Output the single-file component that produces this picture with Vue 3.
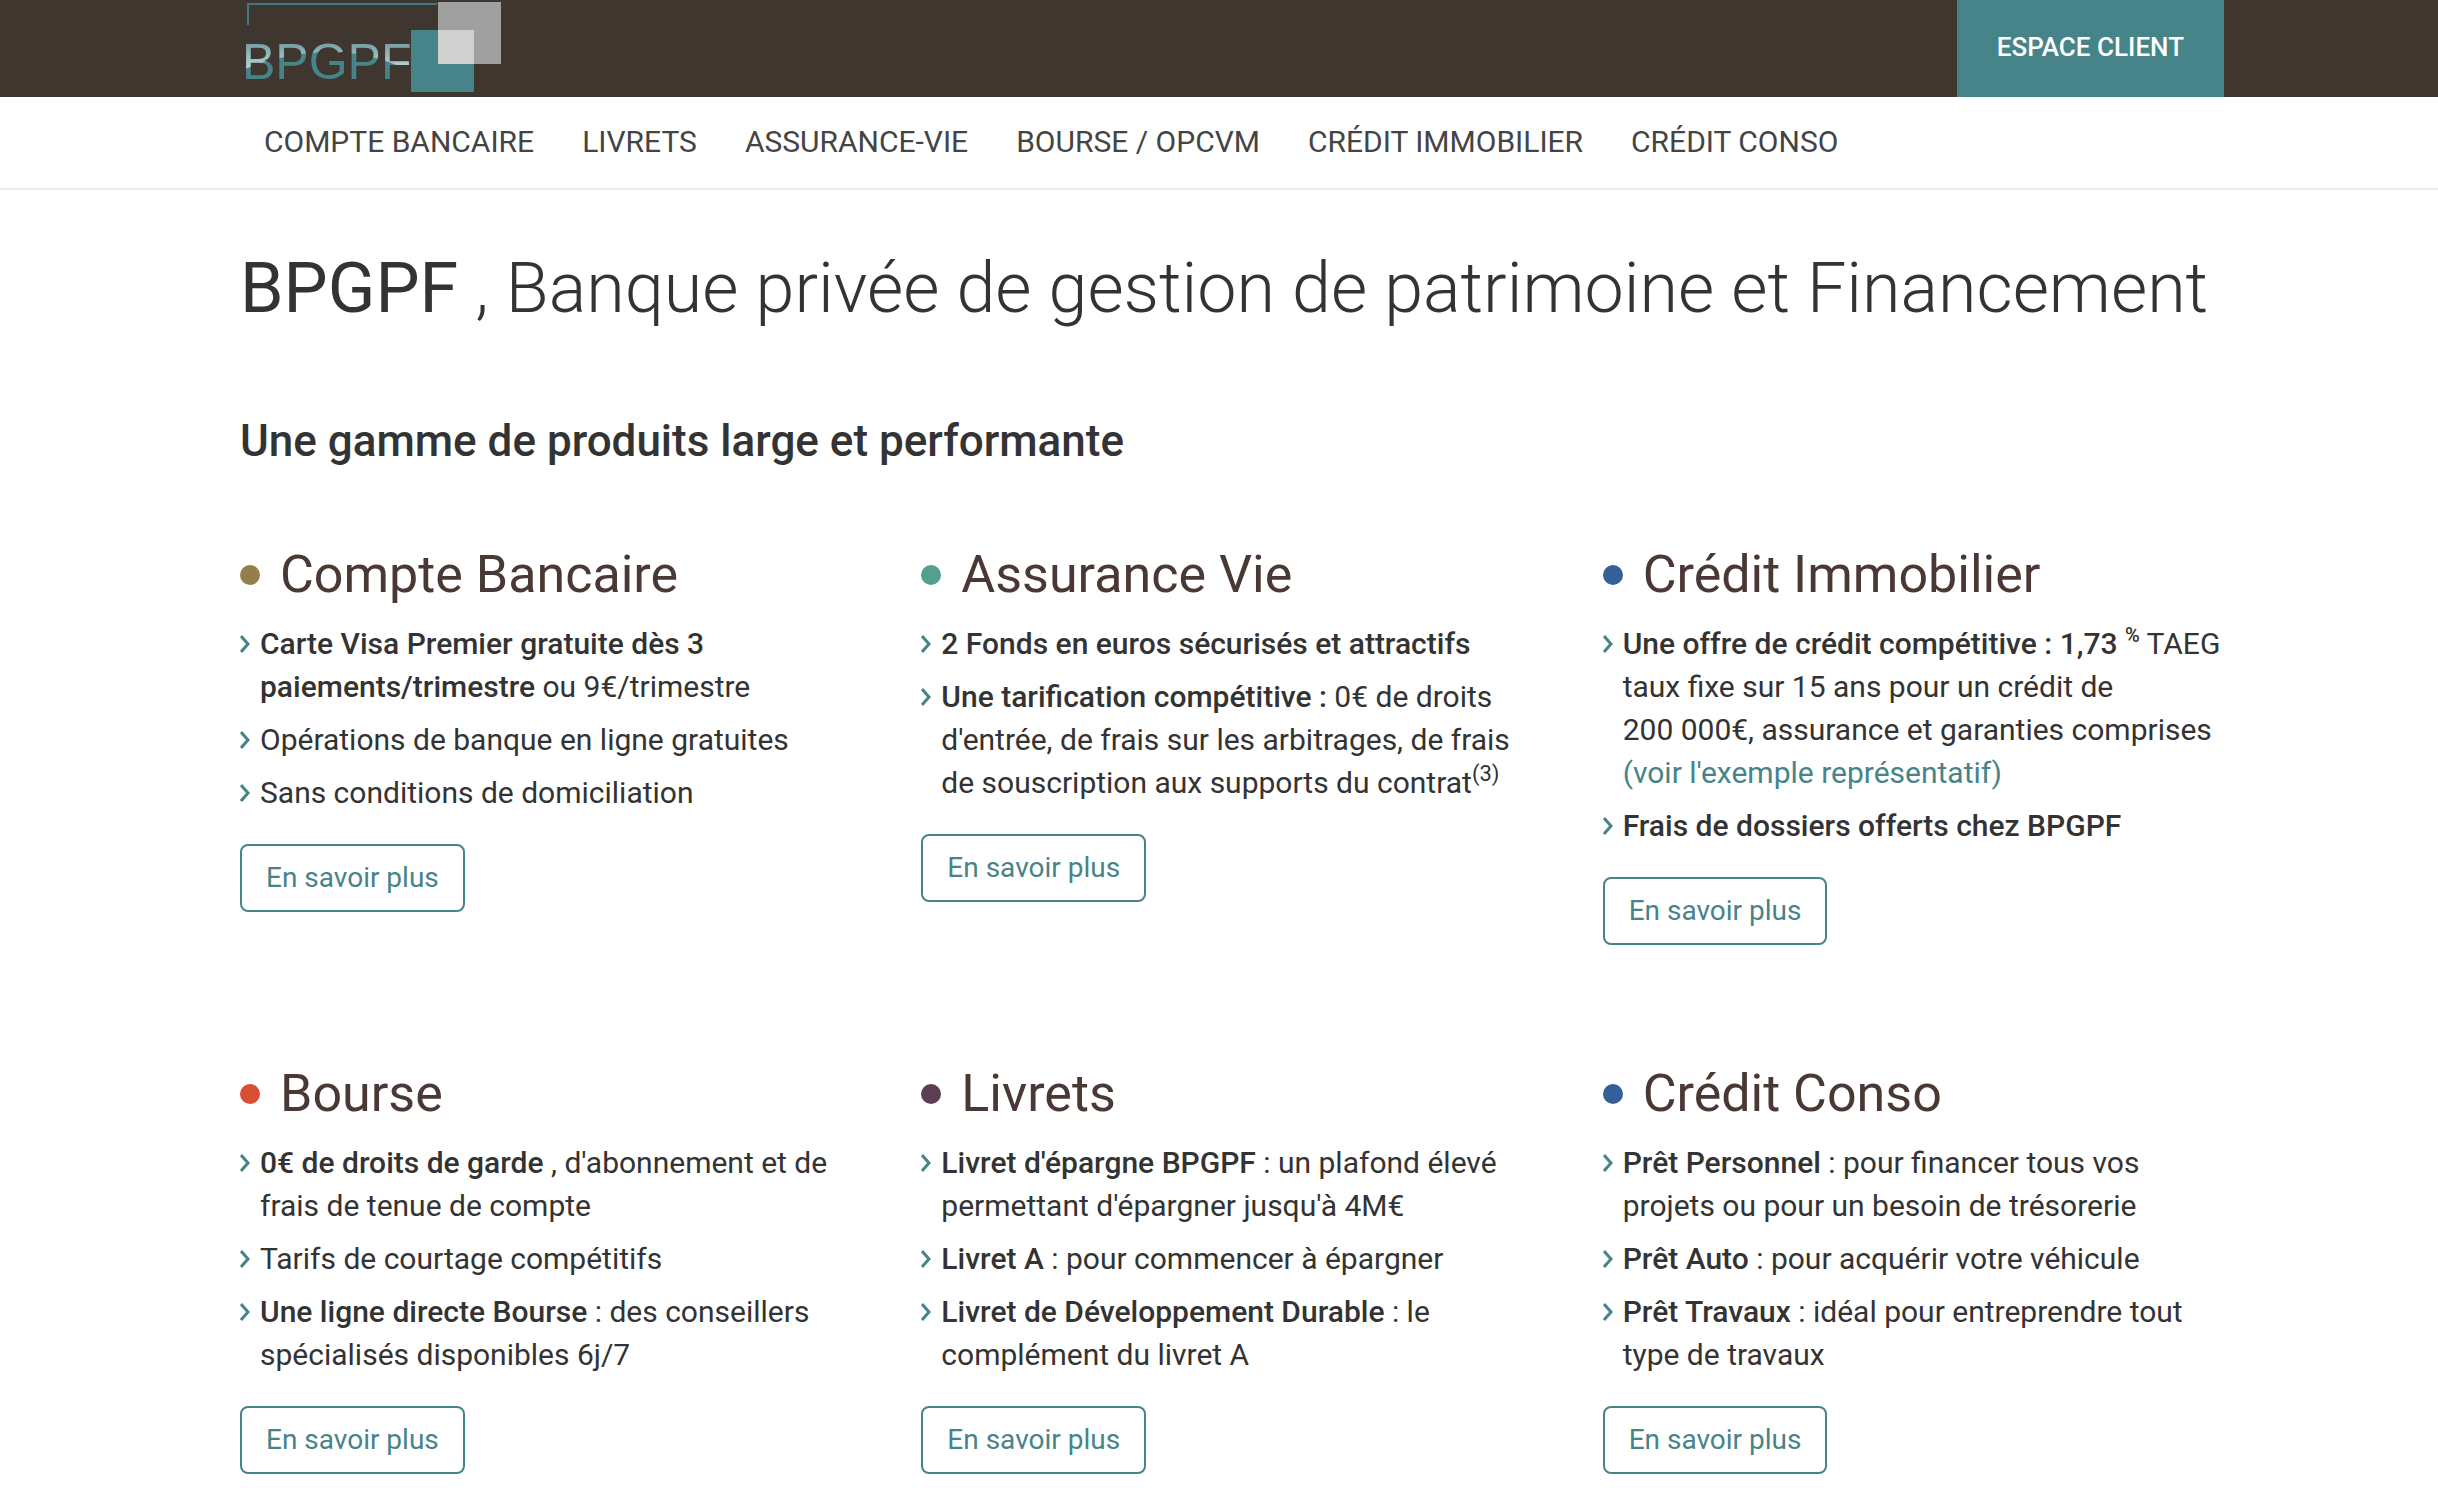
<script setup>
const links = ['Compte bancaire', 'Livrets', 'Assurance-vie', 'Bourse / OPCVM', 'Crédit immobilier', 'Crédit conso']

const products = [
  {
    title: 'Compte Bancaire',
    tone: 'gold',
    items: [
      [{ b: 'Carte Visa Premier gratuite dès 3 paiements/trimestre' }, { t: ' ou 9€/trimestre' }],
      [{ t: 'Opérations de banque en ligne gratuites' }],
      [{ t: 'Sans conditions de domiciliation' }],
    ],
  },
  {
    title: 'Assurance Vie',
    tone: 'green',
    items: [
      [{ b: '2 Fonds en euros sécurisés et attractifs' }],
      [
        { b: 'Une tarification compétitive :' },
        { t: " 0€ de droits d'entrée, de frais sur les arbitrages, de frais de souscription aux supports du contrat" },
        { sup: '(3)' },
      ],
    ],
  },
  {
    title: 'Crédit Immobilier',
    tone: 'blue',
    items: [
      [
        { b: 'Une offre de crédit compétitive : 1,73 ' },
        { sup: '%', strong: true },
        { t: ' TAEG taux fixe sur 15 ans pour un crédit de 200\u00a0000€, assurance et garanties comprises ' },
        { a: "(voir l'exemple représentatif)" },
      ],
      [{ b: 'Frais de dossiers offerts chez BPGPF' }],
    ],
  },
  {
    title: 'Bourse',
    tone: 'red',
    items: [
      [{ b: '0€ de droits de garde' }, { t: " , d'abonnement et de frais de tenue de compte" }],
      [{ t: 'Tarifs de courtage compétitifs' }],
      [{ b: 'Une ligne directe Bourse' }, { t: ' : des conseillers spécialisés disponibles 6j/7' }],
    ],
  },
  {
    title: 'Livrets',
    tone: 'plum',
    items: [
      [{ b: "Livret d'épargne BPGPF" }, { t: " : un plafond élevé permettant d'épargner jusqu'à 4M€" }],
      [{ b: 'Livret A' }, { t: ' : pour commencer à épargner' }],
      [{ b: 'Livret de Développement Durable' }, { t: ' : le complément du livret A' }],
    ],
  },
  {
    title: 'Crédit Conso',
    tone: 'blue',
    items: [
      [{ b: 'Prêt Personnel' }, { t: ' : pour financer tous vos projets ou pour un besoin de trésorerie' }],
      [{ b: 'Prêt Auto' }, { t: ' : pour acquérir votre véhicule' }],
      [{ b: 'Prêt Travaux' }, { t: ' : idéal pour entreprendre tout type de travaux' }],
    ],
  },
]
</script>

<template>
  <div class="page">
    <header class="topbar">
      <a class="logo" href="#" aria-label="BPGPF, accueil">
        <svg width="264" height="97" viewBox="0 0 264 97">
          <defs>
            <linearGradient id="shine" gradientUnits="userSpaceOnUse" x1="0" y1="44" x2="0" y2="68">
              <stop offset="0" stop-color="#76a1a5" />
              <stop offset="1" stop-color="#b9d3d6" />
            </linearGradient>
            <pattern id="sheen" patternUnits="userSpaceOnUse" width="264" height="97">
              <rect width="264" height="97" fill="#478489" />
              <path d="M0 0H264V72H170C150 60 120 52 92 52C60 52 30 58 0 71Z" fill="url(#shine)" />
            </pattern>
          </defs>
          <path d="M8 25V4H197" fill="none" stroke="#417a7e" stroke-width="2" />
          <text x="2" y="79" font-family="Liberation Sans, Arial, sans-serif" font-size="50" fill="url(#sheen)">BPGPF</text>
          <rect x="171" y="30" width="63" height="62" fill="#478489" />
          <rect x="198" y="2" width="63" height="62" fill="#a0a0a0" />
          <rect x="198" y="30" width="36" height="34" fill="#d0d0d0" />
        </svg>
      </a>
      <a class="client" href="#">Espace client</a>
    </header>

    <nav class="menu" aria-label="Produits">
      <a v-for="link in links" :key="link" href="#">{{ link }}</a>
    </nav>

    <main>
      <h1><b>BPGPF</b> , Banque privée de gestion de patrimoine et Financement</h1>
      <h2>Une gamme de produits large et performante</h2>

      <div class="grid">
        <section v-for="product in products" :key="product.title" class="product">
          <h3><span class="dot" :class="product.tone"></span>{{ product.title }}</h3>
          <ul>
            <li v-for="(item, i) in product.items" :key="i">
              <svg class="chevron" width="10" height="18" viewBox="0 0 10 18" aria-hidden="true">
                <path d="M1 1L8 9L1 17" />
              </svg>
              <p>
                <template v-for="(part, j) in item" :key="j">
                  <strong v-if="part.b">{{ part.b }}</strong>
                  <sup v-else-if="part.sup" :class="{ rate: part.strong }">{{ part.sup }}</sup>
                  <a v-else-if="part.a" href="#">{{ part.a }}</a>
                  <template v-else>{{ part.t }}</template>
                </template>
              </p>
            </li>
          </ul>
          <a class="more" href="#">En savoir plus</a>
        </section>
      </div>
    </main>
  </div>
</template>

<style>
body {
  background: #fff;
}
</style>

<style scoped>
.page {
  font-family: Roboto, sans-serif;
  font-size: 30px;
  line-height: 43px;
  color: #333;
}

a {
  color: #478489;
  text-decoration: none;
}

strong {
  font-weight: 500;
}

.topbar {
  display: flex;
  justify-content: space-between;
  height: 97px;
  padding: 0 214px 0 240px;
  background: #3f3630;
}

.logo svg {
  display: block;
}

.client {
  padding: 0 40px;
  background: #478489;
  color: #fff;
  font-size: 26px;
  line-height: 94px;
  font-weight: 500;
  text-transform: uppercase;
}

.menu {
  display: flex;
  flex-wrap: wrap;
  gap: 0 48px;
  padding: 0 214px 2px 264px;
  border-bottom: 2px solid #ececec;
  line-height: 89px;
}

.menu a {
  color: #444;
  text-transform: uppercase;
}

main {
  padding: 58px 214px 26px 240px;
}

h1 {
  margin: 0 0 88px;
  font-size: 70px;
  line-height: 80px;
  font-weight: 300;
}

h1 b {
  font-weight: 400;
}

h2 {
  margin: 0 0 79px;
  font-size: 44px;
  line-height: 50px;
  font-weight: 500;
}

.grid {
  display: grid;
  grid-template-columns: repeat(3, 1fr);
  gap: 119px 60px;
}

h3 {
  display: flex;
  align-items: center;
  gap: 20px;
  margin: 0 0 17px;
  color: #493833;
  font-size: 52px;
  line-height: 60px;
  font-weight: 400;
}

.dot {
  width: 20px;
  height: 20px;
  border-radius: 50%;
}

.gold { background: #937f4b; }
.green { background: #53a090; }
.blue { background: #345f98; }
.red { background: #d94f35; }
.plum { background: #5b3e50; }

ul {
  display: flex;
  flex-direction: column;
  gap: 10px;
  margin: 0 0 30px;
  padding: 0;
  list-style: none;
}

li {
  display: flex;
  gap: 10px;
}

.chevron {
  flex: none;
  margin-top: 13px;
  fill: none;
  stroke: #478489;
  stroke-width: 3;
}

p {
  margin: 0;
}

sup {
  position: relative;
  top: -12px;
  font-size: 22px;
  line-height: 0;
  vertical-align: baseline;
}

.rate {
  font-size: 20px;
  font-weight: 500;
}

.more {
  display: inline-block;
  padding: 0 24px;
  border: 2px solid #478489;
  border-radius: 8px;
  font-size: 28px;
  line-height: 64px;
}
</style>
